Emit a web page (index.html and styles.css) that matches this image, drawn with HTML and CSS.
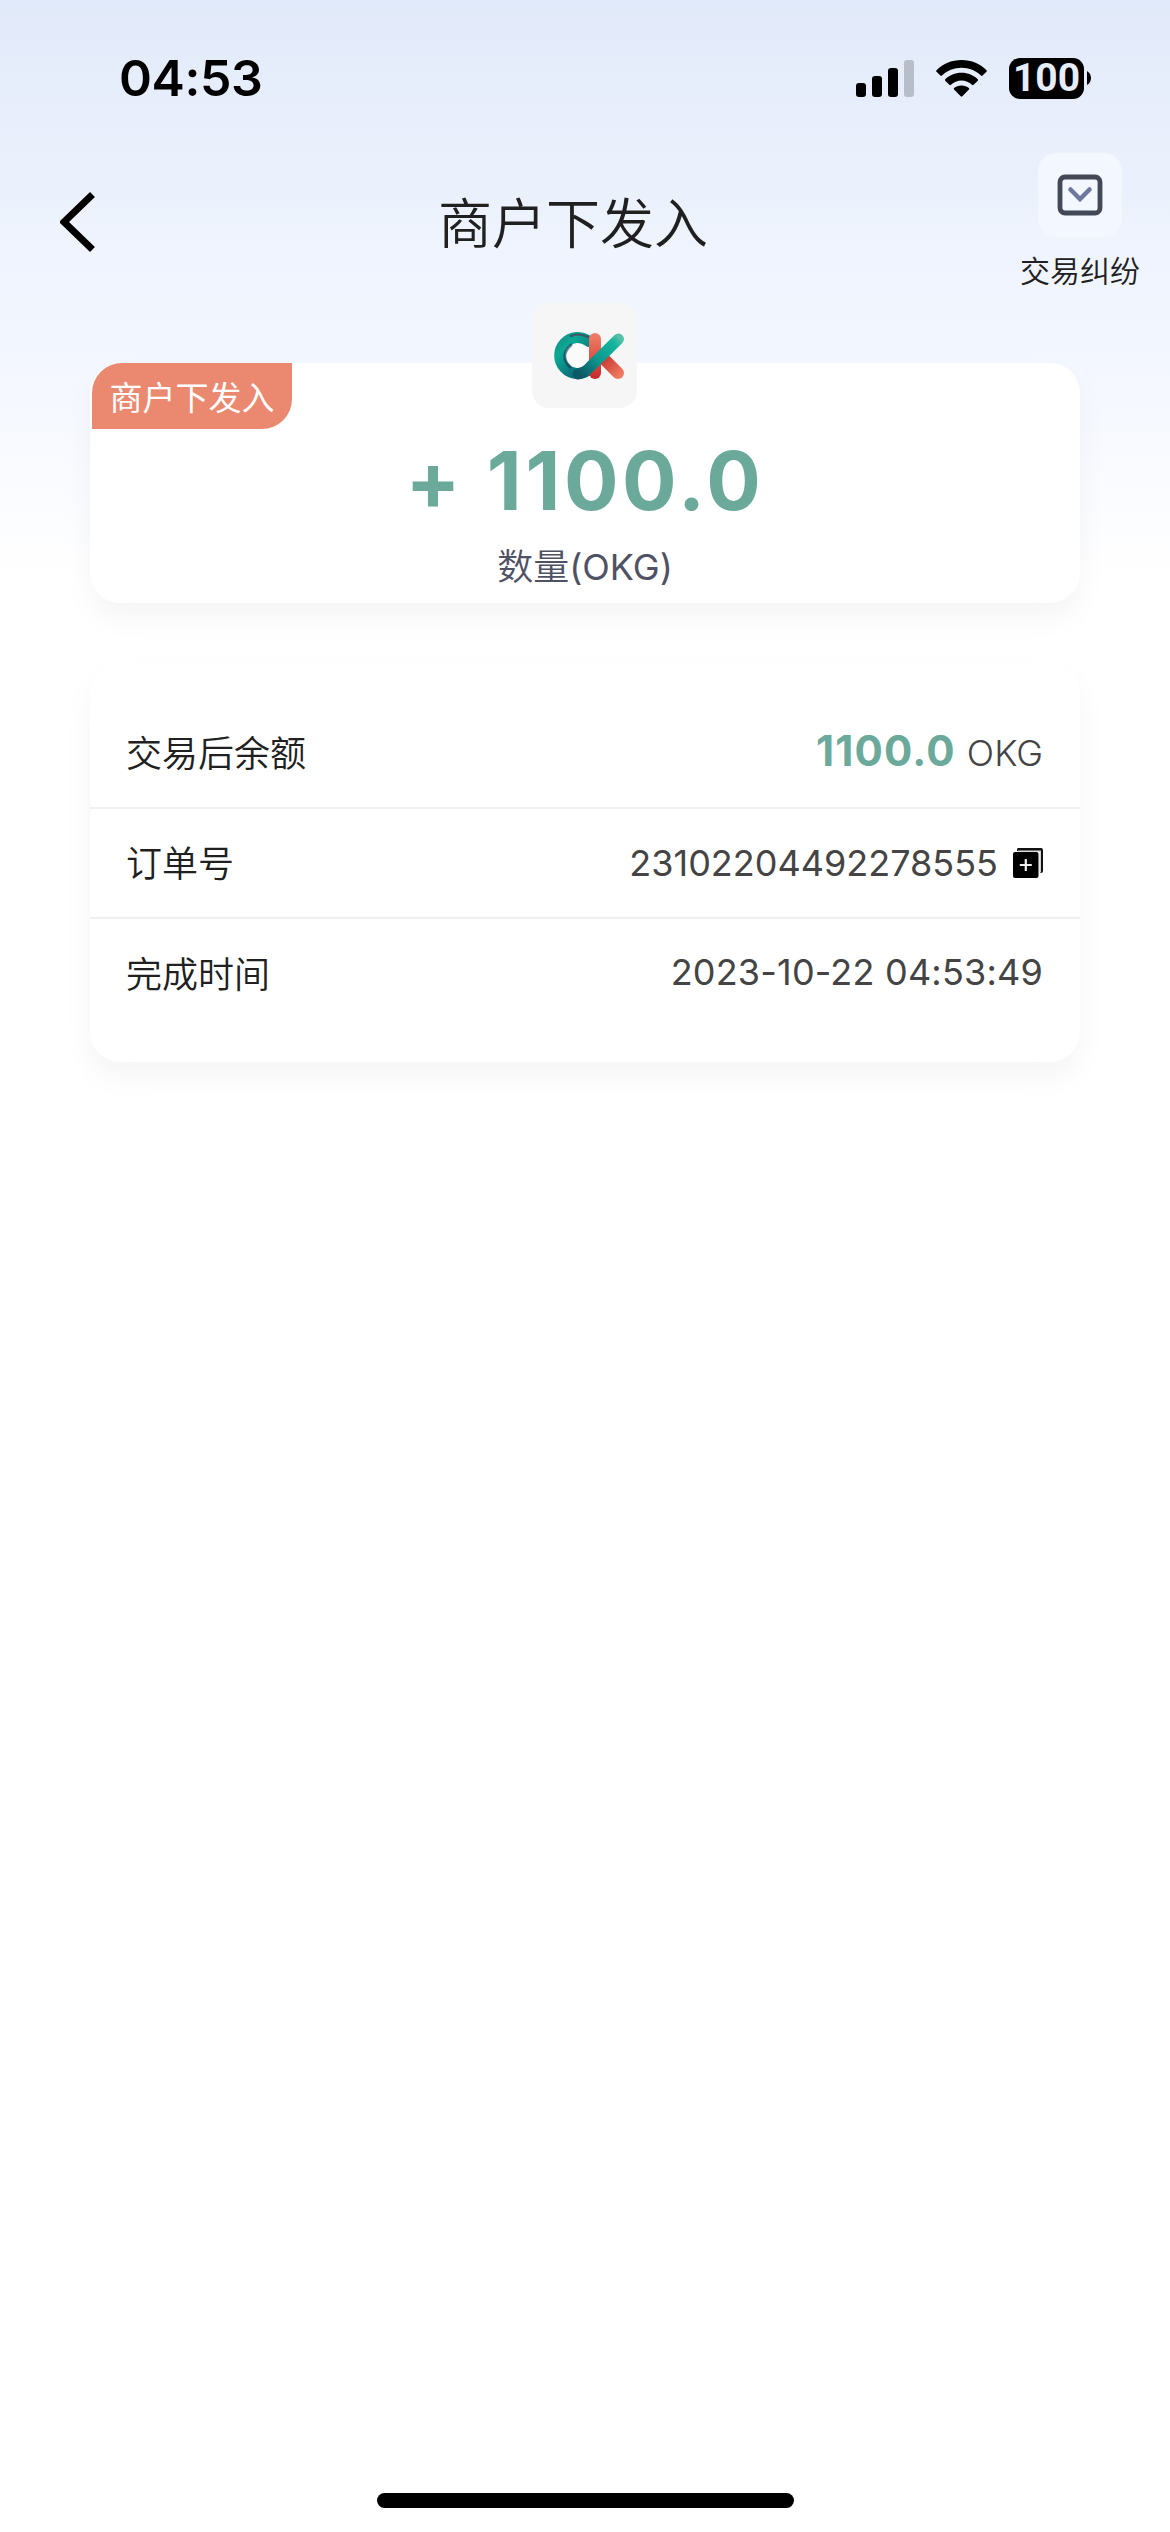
FILE: index.html
```html
<!DOCTYPE html>
<html lang="zh-CN">
<head>
<meta charset="utf-8">
<title>商户下发入</title>
<link rel="stylesheet" href="styles.css">
</head>
<body>
<div class="screen">
  <div class="status">
    <span class="time">04:53</span>
    <div class="status-icons">
      <svg class="signal" width="58" height="37" viewBox="0 0 58 37">
        <rect x="0" y="23" width="10" height="14" rx="3"/>
        <rect x="16" y="16" width="10" height="21" rx="3"/>
        <rect x="32" y="8" width="10" height="29" rx="3"/>
        <rect x="48" y="0" width="10" height="37" rx="3" fill="#b7bec9"/>
      </svg>
      <svg class="wifi" width="51" height="37" viewBox="0 0 51 37">
        <path d="M25.500 0C35.500 0 44.500 4 50.500 10.200Q51.200 11 50.500 11.800L46.600 15.600Q45.800 16.300 45 15.500C40 10.700 33 7.800 25.500 7.800S11 10.700 6 15.500Q5.200 16.300 4.400 15.600L.5 11.800Q-.2 11 .5 10.200C6.500 4 15.500 0 25.500 0Z"/>
        <path d="M25.500 12.800C32 12.800 37.500 15.300 41.800 19.300Q42.500 20 41.800 20.800L37.600 24.800Q36.800 25.500 36 24.800C33.200 22.200 29.500 20.600 25.500 20.600S17.800 22.200 15 24.800Q14.200 25.500 13.400 24.800L9.200 20.800Q8.500 20 9.200 19.300C13.500 15.300 19 12.800 25.500 12.800Z"/>
        <path d="M25.500 25.400C28.500 25.400 31 26.400 32.900 28Q33.600 28.700 32.900 29.500L26.300 36.300Q25.500 37 24.700 36.300L18.100 29.500Q17.400 28.700 18.100 28C20 26.400 22.500 25.400 25.500 25.400Z"/>
      </svg>
      <div class="battery"><span class="battery-level">100</span></div>
      <svg class="battery-tip" width="4" height="14" viewBox="0 0 4 14"><path d="M0 0Q4 2.500 4 7T0 14Z"/></svg>
    </div>
  </div>

  <header class="nav">
    <svg class="back" width="36" height="60" viewBox="0 0 36 60"><path d="M32.500 2.500 4 30l28.500 27.500" fill="none" stroke="#000" stroke-width="7"/></svg>
    <h1 class="title">商户下发入</h1>
    <div class="dispute">
      <div class="dispute-tile">
        <svg width="46" height="42" viewBox="0 0 46 42" fill="none">
          <rect x="3" y="3" width="40" height="36" rx="5" stroke="#434857" stroke-width="4.800"/>
          <path d="M13.500 15.500 23 25l9.500-9.500" stroke="#6f779f" stroke-width="4.500" stroke-linecap="round"/>
        </svg>
      </div>
      <span class="dispute-label">交易纠纷</span>
    </div>
  </header>

  <main class="content">
    <section class="card amount-card">
      <span class="tag">商户下发入</span>
      <div class="logo">
        <svg width="72" height="48" viewBox="0 0 72 48" fill="none" stroke-linecap="round">
          <defs>
            <linearGradient id="ring" x1="0" y1="0" x2="46" y2="46" gradientUnits="userSpaceOnUse">
              <stop offset="0" stop-color="#117e82"/><stop offset=".3" stop-color="#0da994"/><stop offset=".62" stop-color="#0a777d"/><stop offset="1" stop-color="#0b5b67"/>
            </linearGradient>
            <linearGradient id="arm" x1="28" y1="43" x2="67" y2="6" gradientUnits="userSpaceOnUse">
              <stop offset="0" stop-color="#0b5966"/><stop offset=".45" stop-color="#0e9a90"/><stop offset=".85" stop-color="#13b59c"/><stop offset="1" stop-color="#58bfa8"/>
            </linearGradient>
            <linearGradient id="stem" x1="0" y1="0" x2="0" y2="47" gradientUnits="userSpaceOnUse">
              <stop offset="0" stop-color="#f0836b"/><stop offset=".55" stop-color="#de5248"/><stop offset="1" stop-color="#c8262c"/>
            </linearGradient>
            <linearGradient id="leg" x1="49" y1="26" x2="67" y2="44" gradientUnits="userSpaceOnUse">
              <stop offset="0" stop-color="#c7352f"/><stop offset="1" stop-color="#f07b63"/>
            </linearGradient>
          </defs>
          <circle cx="24" cy="24" r="11.500" fill="#fafafa"/>
          <path d="M36 9.500A18 18 0 1 0 36 37.500" stroke="url(#ring)" stroke-width="11"/>
          <path d="M18 4Q26 0.500 35 5" stroke="#53324e" stroke-width="2.500" opacity=".6"/>
          <path d="M18 13Q6 24 17 35" stroke="#123d59" stroke-width="3" opacity=".65"/>
          <path d="M42 7V41" stroke="url(#stem)" stroke-width="12"/>
          <path d="M50 26 65 41" stroke="url(#leg)" stroke-width="12"/>
          <path d="M25 42Q32 41 38 34L65.500 7" stroke="url(#arm)" stroke-width="11"/>
        </svg>
      </div>
      <div class="amount">+ 1100.0</div>
      <div class="unit">数量<span class="unit-code">(OKG)</span></div>
    </section>

    <section class="card detail-card">
      <div class="row">
        <span class="label">交易后余额</span>
        <span class="value total"><b class="balance">1100.0</b><span class="currency">OKG</span></span>
      </div>
      <div class="row">
        <span class="label">订单号</span>
        <span class="value order"><span class="order-no">23102204492278555</span>
          <svg class="copy" width="30" height="30" viewBox="0 0 30 30">
            <path d="M5 0H28Q30 0 30 2V23Q30 25 28 25H27V3H4V2Q4 0 5 0Z" fill="#111"/>
            <path d="M5 3.200H27.200V24.500" fill="none" stroke="#ddd" stroke-width="1.500"/>
            <rect x="0" y="4" width="25.500" height="26" rx="2"/>
            <path d="M12.800 11V23M6.800 17H18.800" stroke="#eee" stroke-width="2.200"/>
          </svg>
        </span>
      </div>
      <div class="row">
        <span class="label">完成时间</span>
        <span class="value stamp">2023-10-22 04:53:49</span>
      </div>
    </section>
  </main>
  <div class="home-indicator"></div>
</div>
</body>
</html>
```

FILE: styles.css
```css
* {
  box-sizing: border-box;
}

body {
  margin: 0;
  font-family: Inter, "Noto Sans CJK SC", sans-serif;
  color: #202020;
  background: #fff;
}

.screen {
  display: flex;
  flex-direction: column;
  width: 1170px;
  height: 2532px;
  background: linear-gradient(#e1eafa 0, #e8eefb 115px, #ebf1fc 190px, #eff4fe 250px, #f2f6ff 340px, #fff 580px);
}

.status {
  display: flex;
  justify-content: space-between;
  align-items: center;
  height: 141px;
  padding: 15px 79px 0 119px;
}

.time {
  font-size: 50px;
  font-weight: 600;
  line-height: 60px;
  letter-spacing: -.4px;
  color: #000;
}

.status-icons {
  display: flex;
  align-items: center;
}

.wifi {
  margin-left: 22px;
}

.battery {
  display: flex;
  align-items: center;
  justify-content: center;
  width: 75px;
  height: 41px;
  margin-left: 22px;
  border-radius: 11px;
  background: #000;
}

.battery-level {
  font-family: Roboto, sans-serif;
  font-size: 39px;
  font-weight: 700;
  line-height: 41px;
  color: #e6edfb;
}

.battery-tip {
  margin-left: 3px;
}

.nav {
  display: grid;
  grid-template-columns: 347px 1fr 272px;
  height: 222px;
  padding: 0 30px 0 60px;
}

.back {
  margin-top: 51px;
}

.title {
  justify-self: start;
  margin: 40px 0 0 31px;
  font-family: "Noto Sans CJK SC DemiLight", "Noto Sans CJK SC", sans-serif;
  font-size: 54px;
  font-weight: 350;
  line-height: 80px;
}

.dispute {
  display: flex;
  flex-direction: column;
  align-items: center;
  justify-self: end;
  padding-top: 12px;
}

.dispute-tile {
  display: flex;
  align-items: center;
  justify-content: center;
  width: 84px;
  height: 84px;
  border-radius: 18px;
  background: #f3f7ff;
}

.dispute-label {
  margin-top: 12px;
  font-size: 30px;
  font-weight: 350;
  line-height: 44px;
}

.content {
  display: flex;
  flex-direction: column;
  flex: 1;
  gap: 60px;
  padding: 0 90px;
}

.card {
  border-radius: 30px;
  background: #fff;
  box-shadow: 0 15px 30px rgba(0, 0, 0, .045);
}

.amount-card {
  position: relative;
  display: flex;
  flex-direction: column;
  align-items: center;
  height: 240px;
  padding-top: 68px;
}

.tag {
  position: absolute;
  top: 0;
  left: 2px;
  width: 200px;
  height: 66px;
  border-radius: 30px 0;
  font-size: 33px;
  line-height: 71px;
  text-align: center;
  color: #fff;
  background: #eb8970;
}

.logo {
  position: absolute;
  top: -60px;
  left: 442px;
  display: flex;
  align-items: center;
  justify-content: center;
  width: 105px;
  height: 105px;
  padding-left: 8px;
  border-radius: 17px;
  background: #f6f6f6;
}

.amount {
  font-size: 81px;
  font-weight: 700;
  line-height: 100px;
  letter-spacing: 3.6px;
  color: #6ba99b;
}

.unit {
  margin-top: 9px;
  font-size: 36px;
  font-weight: 350;
  line-height: 54px;
  color: #4f5165;
}

.unit-code {
  font-weight: 400;
}

.detail-card {
  height: 399px;
  padding: 36px 0;
}

.row {
  display: flex;
  align-items: center;
  justify-content: space-between;
  height: 110px;
  padding: 0 37px 0 36px;
  border-bottom: 2px solid #f0f0f0;
}

.row:last-child {
  border-bottom: 0;
}

.label {
  padding-top: 2px;
  font-size: 36px;
  font-weight: 350;
  line-height: 54px;
}

.value {
  display: flex;
  align-items: baseline;
  font-size: 36px;
  line-height: 54px;
  color: #444;
}

.total {
  padding-bottom: 2px;
}

.balance {
  font-size: 42px;
  font-weight: 700;
  letter-spacing: 1.2px;
  color: #6ba99b;
}

.currency {
  margin-left: 11px;
  font-weight: 300;
}

.order {
  align-items: center;
  padding-bottom: 1px;
}

.copy {
  margin-left: 15px;
}

.stamp {
  padding-bottom: 5px;
  letter-spacing: .2px;
}

.home-indicator {
  align-self: center;
  width: 417px;
  height: 15px;
  margin-bottom: 24px;
  border-radius: 8px;
  background: #000;
}
```
